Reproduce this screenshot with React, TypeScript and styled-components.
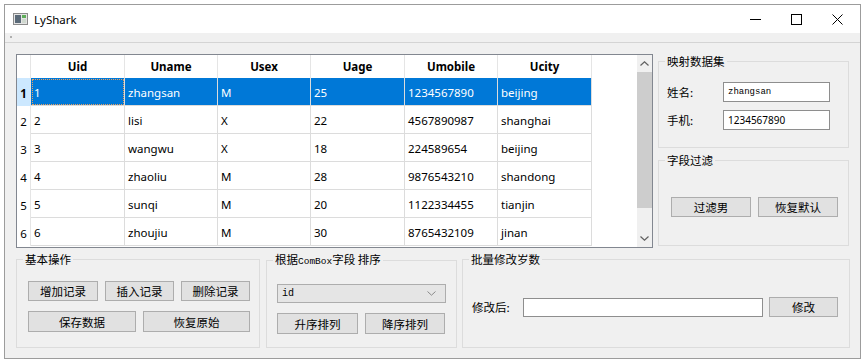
import { createGlobalStyle, styled } from "styled-components";

const GlobalStyle = createGlobalStyle`
  html, body {
    margin: 0;
    background: #fff;
  }
  body {
    font-family: "Noto Sans", "Noto Sans CJK SC", sans-serif;
    color: #000;
  }
  * {
    box-sizing: border-box;
  }
`;

const CJK = `"Noto Sans CJK SC", "Noto Sans", sans-serif`;

const rows = [
  { uid: "1", name: "zhangsan", sex: "M", age: "25", mobile: "1234567890", city: "beijing" },
  { uid: "2", name: "lisi", sex: "X", age: "22", mobile: "4567890987", city: "shanghai" },
  { uid: "3", name: "wangwu", sex: "X", age: "18", mobile: "224589654", city: "beijing" },
  { uid: "4", name: "zhaoliu", sex: "M", age: "28", mobile: "9876543210", city: "shandong" },
  { uid: "5", name: "sunqi", sex: "M", age: "20", mobile: "1122334455", city: "tianjin" },
  { uid: "6", name: "zhoujiu", sex: "M", age: "30", mobile: "8765432109", city: "jinan" },
];

const columns = ["Uid", "Uname", "Usex", "Uage", "Umobile", "Ucity"];

const App = () => {
  return (
    <Page>
      <GlobalStyle />
      <Window>
        {/* 标题栏 */}
        <TitleBar>
          <AppIcon width="15" height="12" viewBox="0 0 15 12">
            <rect x="0.5" y="0.5" width="14" height="11" fill="#e4e4e4" stroke="#8a8a8a" />
            <rect x="2" y="2" width="6" height="8" fill="#5a6a78" />
            <rect x="9" y="2" width="4" height="3" fill="#5fae5a" />
            <rect x="9" y="6" width="4" height="4" fill="#cfd8cf" />
          </AppIcon>
          <Title>LyShark</Title>
          <Captions>
            <CaptionButton>
              <svg width="11" height="11" viewBox="0 0 11 11">
                <line x1="0" y1="5.5" x2="11" y2="5.5" stroke="#000" strokeWidth="1" />
              </svg>
            </CaptionButton>
            <CaptionButton>
              <svg width="11" height="11" viewBox="0 0 11 11">
                <rect x="0.5" y="0.5" width="10" height="10" fill="none" stroke="#000" strokeWidth="1" />
              </svg>
            </CaptionButton>
            <CaptionButton>
              <svg width="11" height="11" viewBox="0 0 11 11">
                <path d="M0.5 0.5 L10.5 10.5 M10.5 0.5 L0.5 10.5" stroke="#000" strokeWidth="1" />
              </svg>
            </CaptionButton>
          </Captions>
        </TitleBar>
        <ToolStrip>
          <Grip />
        </ToolStrip>

        <Body>
          <TopRow>
            {/* 表格 */}
            <TableFrame>
              <Grid>
                <HeaderCorner />
                {columns.map((c) => (
                  <HeaderCell key={c}>{c}</HeaderCell>
                ))}
                <Filler />
                {rows.map((r, i) => {
                  const sel = i === 0;
                  return [
                    <RowHeader key={`h${i}`} $selected={sel}>
                      {i + 1}
                    </RowHeader>,
                    <Cell key={`a${i}`} $selected={sel} $focus={sel}>
                      {r.uid}
                    </Cell>,
                    <Cell key={`b${i}`} $selected={sel}>{r.name}</Cell>,
                    <Cell key={`c${i}`} $selected={sel}>{r.sex}</Cell>,
                    <Cell key={`d${i}`} $selected={sel}>{r.age}</Cell>,
                    <Cell key={`e${i}`} $selected={sel}>{r.mobile}</Cell>,
                    <Cell key={`f${i}`} $selected={sel}>{r.city}</Cell>,
                    <Filler key={`g${i}`} />,
                  ];
                })}
              </Grid>
              <ScrollBar>
                <ScrollArrow>
                  <svg width="9" height="5" viewBox="0 0 9 5">
                    <path d="M0.5 4.5 L4.5 0.8 L8.5 4.5" fill="none" stroke="#606060" strokeWidth="1.2" />
                  </svg>
                </ScrollArrow>
                <ScrollTrack>
                  <ScrollThumb />
                </ScrollTrack>
                <ScrollArrow>
                  <svg width="9" height="5" viewBox="0 0 9 5">
                    <path d="M0.5 0.5 L4.5 4.2 L8.5 0.5" fill="none" stroke="#606060" strokeWidth="1.2" />
                  </svg>
                </ScrollArrow>
              </ScrollBar>
            </TableFrame>

            {/* 右侧 */}
            <SidePanel>
              <Group $height={94}>
                <GroupTitle>映射数据集</GroupTitle>
                <GroupBody $pad="14px 8px 0 8px">
                  <FormGrid>
                    <FieldLabel>姓名:</FieldLabel>
                    <LineEdit $mono>zhangsan</LineEdit>
                    <FieldLabel>手机:</FieldLabel>
                    <LineEdit>1234567890</LineEdit>
                  </FormGrid>
                </GroupBody>
              </Group>
              <Group $height={93}>
                <GroupTitle>字段过滤</GroupTitle>
                <GroupBody $pad="30px 12px 0 12px">
                  <ButtonRow>
                    <PushButton $w={80} $h={20}>过滤男</PushButton>
                    <PushButton $w={80} $h={20}>恢复默认</PushButton>
                  </ButtonRow>
                </GroupBody>
              </Group>
            </SidePanel>
          </TopRow>

          <BottomRow>
            <Group $height={96} $w={244}>
              <GroupTitle>基本操作</GroupTitle>
              <GroupBody $pad="15px 11px 0 11px">
                <ButtonStack>
                  <ButtonRow>
                    <PushButton $w={70} $h={20}>增加记录</PushButton>
                    <PushButton $w={69} $h={20}>插入记录</PushButton>
                    <PushButton $w={69} $h={20}>删除记录</PushButton>
                  </ButtonRow>
                  <ButtonRow>
                    <PushButton $w={108} $h={21}>保存数据</PushButton>
                    <PushButton $w={107} $h={21}>恢复原始</PushButton>
                  </ButtonRow>
                </ButtonStack>
              </GroupBody>
            </Group>

            <Group $height={96} $w={191}>
              <GroupTitle>
                根据<Small>ComBox</Small>字段 排序
              </GroupTitle>
              <GroupBody $pad="15px 10px 0 10px">
                <ButtonStack>
                  <ComboBox>
                    <span>id</span>
                    <svg width="9" height="5" viewBox="0 0 9 5">
                      <path d="M0.5 0.5 L4.5 4.2 L8.5 0.5" fill="none" stroke="#8a8a8a" strokeWidth="1" />
                    </svg>
                  </ComboBox>
                  <ButtonRow>
                    <PushButton $w={81} $h={21}>升序排列</PushButton>
                    <PushButton $w={80} $h={21}>降序排列</PushButton>
                  </ButtonRow>
                </ButtonStack>
              </GroupBody>
            </Group>

            <Group $height={96} $grow>
              <GroupTitle>批量修改岁数</GroupTitle>
              <GroupBody $pad="31px 9px 0 9px">
                <EditRow>
                  <FieldLabel $w={45}>修改后:</FieldLabel>
                  <LineEdit $w={240} $h={19} />
                  <PushButton $w={69} $h={20}>修改</PushButton>
                </EditRow>
              </GroupBody>
            </Group>
          </BottomRow>
        </Body>
      </Window>
    </Page>
  );
};

export default App;

const Page = styled.div`
  padding: 4px 0 0 4px;
`;

const Window = styled.div`
  width: 857px;
  height: 355px;
  border: 1px solid #9c9c9c;
  display: flex;
  flex-direction: column;
  background: #f0f0f0;
`;

const TitleBar = styled.div`
  height: 28px;
  background: #fff;
  display: flex;
  align-items: center;
  padding-left: 8px;
`;

const AppIcon = styled.svg`
  flex: none;
`;

const Title = styled.span`
  margin-left: 6px;
  font-size: 11.5px;
  font-family: "Noto Sans", sans-serif;
  color: #000;
`;

const Captions = styled.div`
  margin-left: auto;
  display: flex;
  height: 100%;
  padding-right: 2px;
`;

const CaptionButton = styled.div`
  width: 41px;
  height: 100%;
  display: flex;
  align-items: center;
  justify-content: center;
`;

const ToolStrip = styled.div`
  height: 10px;
  border-bottom: 1px solid #d4d4d4;
  background: #f0f0f0;
  padding: 3px 0 0 5px;
`;

const Grip = styled.div`
  width: 2px;
  height: 2px;
  background: #b0b0b0;
`;

const Body = styled.div`
  flex: 1;
  padding: 11px 10px 10px 11px;
  display: flex;
  flex-direction: column;
  gap: 4px;
`;

const TopRow = styled.div`
  display: flex;
  gap: 5px;
  height: 194px;
`;

const TableFrame = styled.div`
  width: 637px;
  height: 194px;
  border: 1px solid #828790;
  background: #fff;
  display: flex;
`;

const Grid = styled.div`
  flex: 1;
  display: grid;
  grid-template-columns: 14px 94px 93px 93px 94px 93px 94px 1fr;
  grid-template-rows: 23px repeat(6, 28px);
  font-size: 11.5px;
  font-family: "Noto Sans", sans-serif;
`;

const HeaderCorner = styled.div`
  border-right: 1px solid #e5e5e5;
`;

const HeaderCell = styled.div`
  border-right: 1px solid #e5e5e5;
  display: flex;
  align-items: center;
  justify-content: center;
  font-weight: 700;
`;

const RowHeader = styled.div<{ $selected?: boolean }>`
  border-right: 1px solid #e5e5e5;
  background: ${(p) => (p.$selected ? "#cce8ff" : "#fff")};
  font-weight: ${(p) => (p.$selected ? 700 : 400)};
  display: flex;
  align-items: center;
  justify-content: center;
  padding-top: 2px;
`;

const Cell = styled.div<{ $selected?: boolean; $focus?: boolean }>`
  border-right: 1px solid #dcdcdc;
  border-bottom: 1px solid #dcdcdc;
  background: ${(p) => (p.$selected ? "#0078d7" : "#fff")};
  color: ${(p) => (p.$selected ? "#fff" : "#000")};
  display: flex;
  align-items: center;
  padding: 1px 0 0 3px;
  outline: ${(p) => (p.$focus ? "1px dotted #e8a060" : "none")};
  outline-offset: -2px;
`;

const Filler = styled.div`
  background: #fff;
`;

const ScrollBar = styled.div`
  width: 15px;
  background: #f0f0f0;
  display: flex;
  flex-direction: column;
`;

const ScrollArrow = styled.div`
  height: 17px;
  display: flex;
  align-items: center;
  justify-content: center;
`;

const ScrollTrack = styled.div`
  flex: 1;
`;

const ScrollThumb = styled.div`
  height: 136px;
  background: #cdcdcd;
`;

const SidePanel = styled.div`
  width: 191px;
  display: flex;
  flex-direction: column;
  gap: 5px;
`;

const Group = styled.fieldset<{ $height: number; $w?: number; $grow?: boolean }>`
  margin: 0;
  min-width: 0;
  height: ${(p) => p.$height}px;
  width: ${(p) => (p.$w ? `${p.$w}px` : "auto")};
  flex: ${(p) => (p.$grow ? 1 : "none")};
  border: 1px solid #dcdcdc;
  padding: 0;
  font-family: ${CJK};
`;

const GroupTitle = styled.legend`
  font-size: 11.5px;
  line-height: 14px;
  padding: 0 2px;
  margin-left: 6px;
  color: #000;
`;

const GroupBody = styled.div<{ $pad: string }>`
  padding: ${(p) => p.$pad};
`;

const Small = styled.span`
  font-family: "Liberation Mono", monospace;
  font-size: 9.5px;
`;

const FormGrid = styled.div`
  display: grid;
  grid-template-columns: 56px 107px;
  grid-auto-rows: 20px;
  row-gap: 8px;
  align-items: center;
`;

const FieldLabel = styled.span<{ $w?: number }>`
  font-size: 11.5px;
  font-family: ${CJK};
  width: ${(p) => (p.$w ? `${p.$w}px` : "auto")};
  flex: none;
`;

const LineEdit = styled.div<{ $mono?: boolean; $w?: number; $h?: number }>`
  width: ${(p) => (p.$w ? `${p.$w}px` : "auto")};
  height: ${(p) => (p.$h ? `${p.$h}px` : "20px")};
  background: #fff;
  border: 1px solid #8e8e8e;
  display: flex;
  align-items: center;
  padding-left: 4px;
  font-family: ${(p) => (p.$mono ? `"Liberation Mono", monospace` : `"Noto Sans", sans-serif`)};
  font-size: ${(p) => (p.$mono ? "9px" : "10px")};
  flex: none;
`;

const ButtonStack = styled.div`
  display: flex;
  flex-direction: column;
  gap: 10px;
`;

const ButtonRow = styled.div`
  display: flex;
  gap: 7px;
`;

const PushButton = styled.div<{ $w: number; $h: number }>`
  width: ${(p) => p.$w}px;
  height: ${(p) => p.$h}px;
  flex: none;
  background: #e1e1e1;
  border: 1px solid #adadad;
  display: flex;
  align-items: center;
  justify-content: center;
  font-family: ${CJK};
  font-size: 11.5px;
  color: #000;
`;

const ComboBox = styled.div`
  width: 169px;
  height: 19px;
  background: #e5e5e5;
  border: 1px solid #adadad;
  display: flex;
  align-items: center;
  justify-content: space-between;
  padding: 0 9px 0 4px;
  font-family: "Liberation Mono", monospace;
  font-size: 10px;
`;

const EditRow = styled.div`
  display: flex;
  align-items: center;
  gap: 6px;
`;

const BottomRow = styled.div`
  display: flex;
  gap: 6px;

  & > fieldset:last-child {
    margin-left: -1px;
  }
`;
